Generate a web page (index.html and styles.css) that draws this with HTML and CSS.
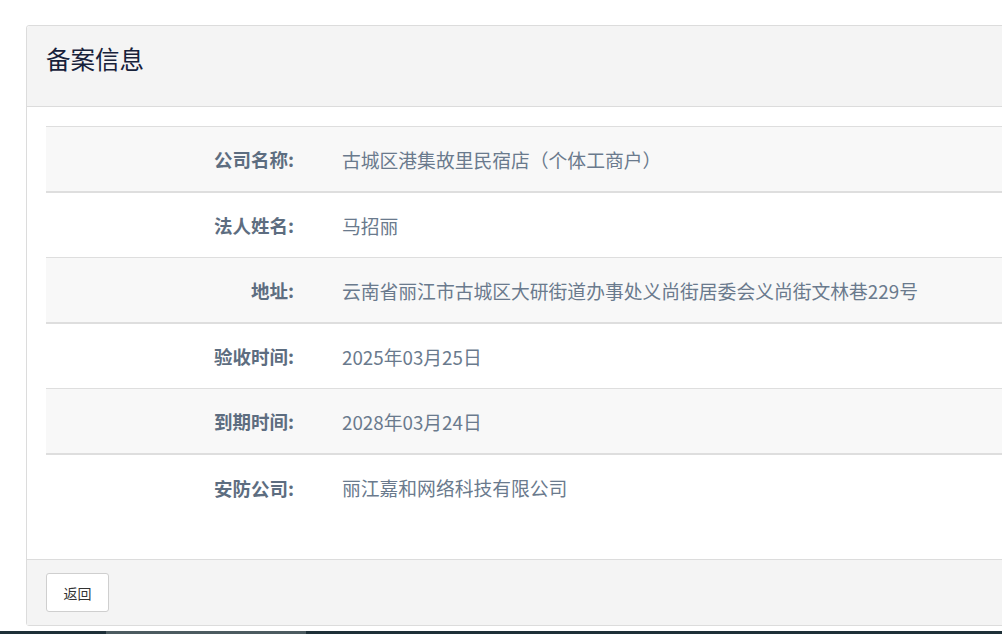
FILE: index.html
```html
<!DOCTYPE html>
<html lang="zh-CN">
<head>
<meta charset="utf-8">
<title>备案信息</title>
<link rel="stylesheet" href="styles.css">
</head>
<body>
<div class="card">
  <div class="card-header">
    <h3 class="card-title">备案信息</h3>
  </div>
  <div class="card-body">
    <div class="info-table">
      <div class="row striped">
        <div class="label">公司名称:</div>
        <div class="value">古城区港集故里民宿店（个体工商户）</div>
      </div>
      <div class="row">
        <div class="label">法人姓名:</div>
        <div class="value">马招丽</div>
      </div>
      <div class="row striped">
        <div class="label">地址:</div>
        <div class="value">云南省丽江市古城区大研街道办事处义尚街居委会义尚街文林巷229号</div>
      </div>
      <div class="row">
        <div class="label">验收时间:</div>
        <div class="value">2025年03月25日</div>
      </div>
      <div class="row striped">
        <div class="label">到期时间:</div>
        <div class="value">2028年03月24日</div>
      </div>
      <div class="row last">
        <div class="label">安防公司:</div>
        <div class="value">丽江嘉和网络科技有限公司</div>
      </div>
    </div>
  </div>
  <div class="card-footer">
    <button class="btn" type="button">返回</button>
  </div>
</div>
<div class="hscroll"><div class="hscroll-thumb"></div></div>
</body>
</html>
```

FILE: styles.css
```css
html, body {
  margin: 0;
  padding: 0;
  overflow: hidden;
  background: #ffffff;
}

body {
  width: 1002px;
  height: 634px;
  padding: 25px 0 0 26px;
  box-sizing: border-box;
  font-family: "Noto Sans CJK SC", "Microsoft YaHei", sans-serif;
}

.card {
  width: 1000px;
  border: 1px solid #dcdcdc;
  border-radius: 3px;
  background: #ffffff;
}

.card-header {
  height: 81px;
  box-sizing: border-box;
  padding: 16px 19px 0;
  background: #f4f4f4;
  border-bottom: 1px solid #dcdcdc;
  border-radius: 3px 3px 0 0;
}

.card-title {
  margin: 0;
  font-size: 24.5px;
  font-weight: 400;
  line-height: 34px;
  color: #17213a;
}

.card-body {
  padding: 19px 19px 39px;
}

.info-table {
  display: flex;
  flex-direction: column;
}

.row {
  display: flex;
  align-items: center;
  height: 65px;
  box-sizing: border-box;
  border-top: 1px solid #dedede;
}

.row.striped {
  background: #f8f8f8;
  height: 66px;
  border-bottom: 1px solid #dedede;
}

.row.last {
  height: 66px;
}

.label {
  width: 257px;
  box-sizing: border-box;
  padding-right: 9px;
  text-align: right;
  font-size: 18.5px;
  font-weight: 700;
  color: #5d6d80;
}

.value {
  padding-left: 39px;
  font-size: 18.8px;
  color: #6a7a8d;
  white-space: nowrap;
}

.card-footer {
  height: 66px;
  box-sizing: border-box;
  padding: 13px 19px;
  background: #f4f4f4;
  border-top: 1px solid #dcdcdc;
}

.btn {
  width: 63px;
  height: 39px;
  box-sizing: border-box;
  padding: 0;
  border: 1px solid #cfcfcf;
  border-radius: 3px;
  background: #ffffff;
  font-family: "Noto Sans CJK SC", "Microsoft YaHei", sans-serif;
  font-size: 14px;
  color: #333333;
}

.hscroll {
  position: fixed;
  left: 0;
  bottom: 0;
  width: 100%;
  height: 3px;
  background: #1e3038;
}

.hscroll-thumb {
  margin-left: 106px;
  width: 200px;
  height: 3px;
  background: #4c5b60;
}
```
